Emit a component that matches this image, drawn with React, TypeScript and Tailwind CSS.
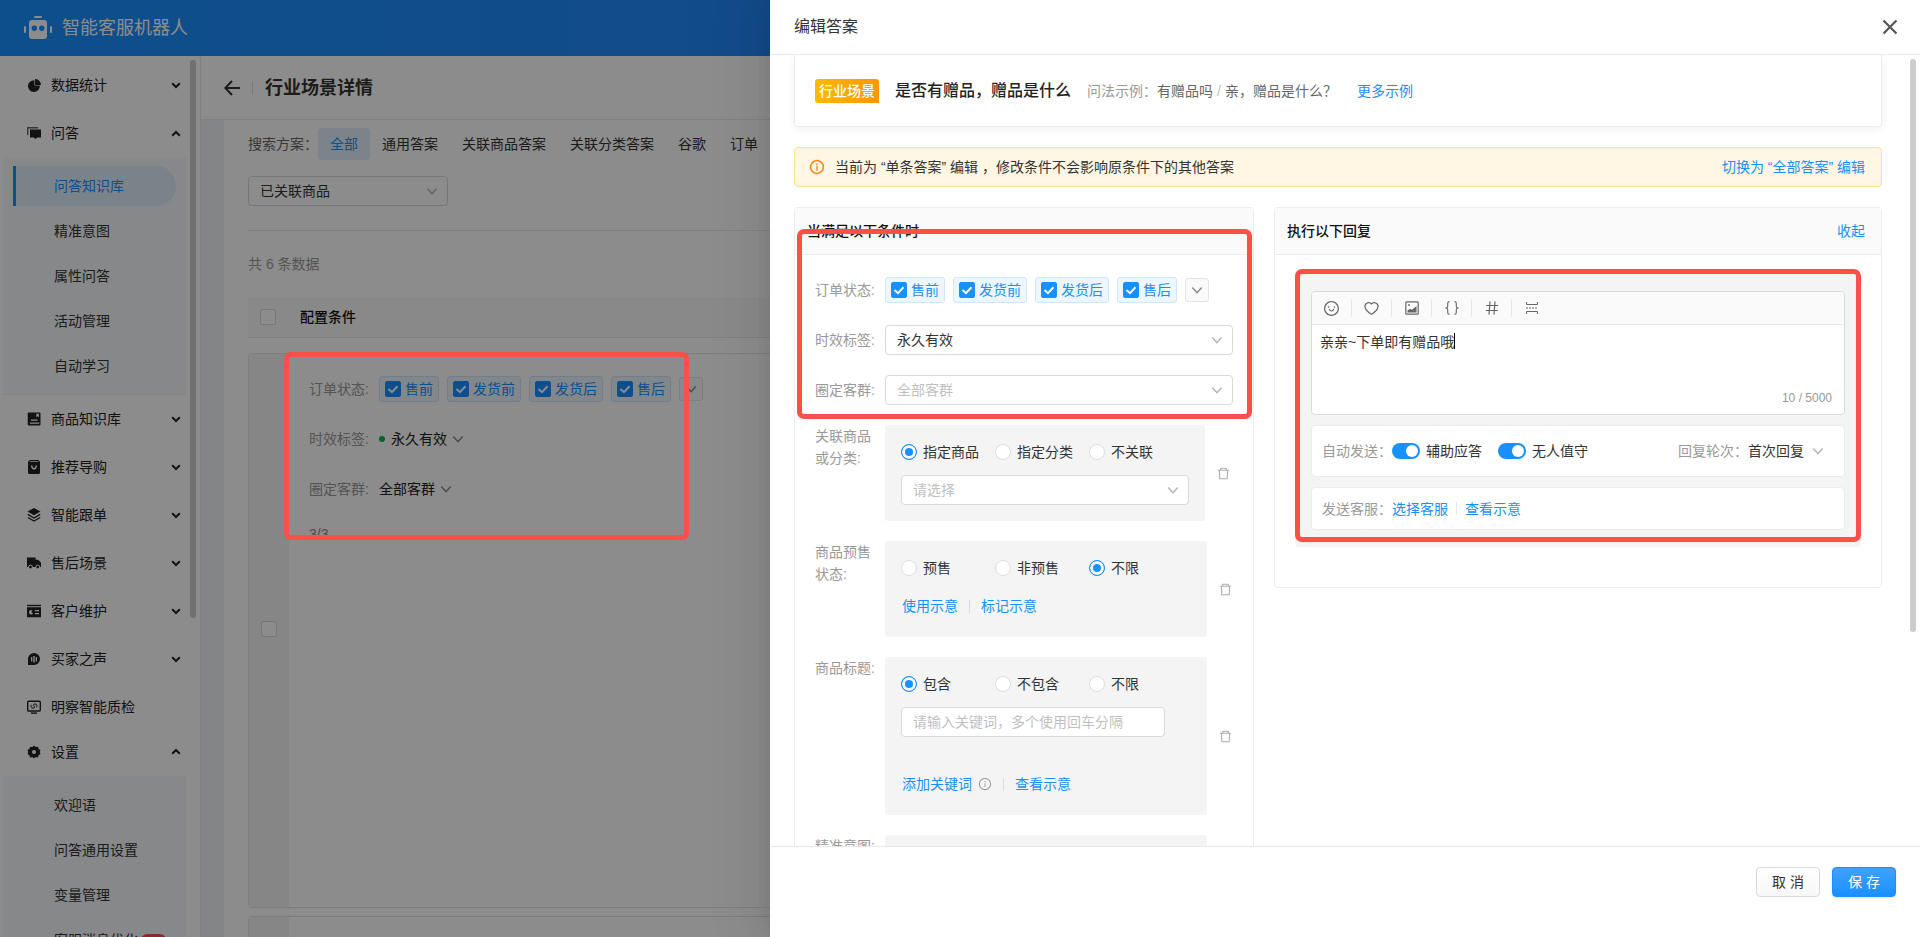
import { useState, type ReactNode } from 'react';
import {
  AiFillPieChart,
  AiOutlineDelete,
  AiOutlineHeart,
  AiOutlineInfoCircle,
  AiOutlineSmile,
} from 'react-icons/ai';

type MenuItem = {
  label: string;
  icon: ReactNode;
  open?: boolean;
  leaf?: boolean;
  children?: { label: string; active?: boolean; badge?: string }[];
};

const menu: MenuItem[] = [
  { label: '数据统计', icon: <AiFillPieChart className="size-[15px]" /> },
  {
    label: '问答',
    open: true,
    icon: (
      <MenuIcon>
        <path d="M0 1h11v1.4H1.4V9H0z" opacity=".7" />
        <path d="M3 3.4h11v8h-3.6L8.5 13l-1.9-1.6H3z" />
      </MenuIcon>
    ),
    children: [
      { label: '问答知识库', active: true },
      { label: '精准意图' },
      { label: '属性问答' },
      { label: '活动管理' },
      { label: '自动学习' },
    ],
  },
  {
    label: '商品知识库',
    icon: (
      <MenuIcon>
        <path
          fillRule="evenodd"
          d="M2 .5h10.500q1 0 1 1v11q0 1-1 1H2q-1.300 0-1.300-1.300V1.800Q.7.500 2 .5zM9.300 1.800v3.400l1.300-.9 1.300.9V1.800zM4 7.600v1.100h6.500V7.600zM3 10.400v1.300h9.200v-1.300z"
        />
      </MenuIcon>
    ),
  },
  {
    label: '推荐导购',
    icon: (
      <MenuIcon>
        <path
          fillRule="evenodd"
          d="M2.500 0h9L13 2v10.500q0 1.500-1.500 1.500h-9Q1 14 1 12.500V2zM3 1.200 2.500 2h9l-.5-.8zM4 5.500C4 11 10 11 10 5.500H8.600c0 3.200-3.200 3.200-3.200 0z"
        />
      </MenuIcon>
    ),
  },
  {
    label: '智能跟单',
    icon: (
      <MenuIcon>
        <path d="M7 0l6.500 3.600L7 7.300.5 3.600z" />
        <path
          d="M.8 6.400 7 10l6.200-3.600M.8 9.500 7 13l6.200-3.500"
          fill="none"
          stroke="currentColor"
          strokeWidth="1.300"
        />
      </MenuIcon>
    ),
  },
  {
    label: '售后场景',
    icon: (
      <MenuIcon>
        <path d="M0 1.500h8.600v2.200h2.600L14 6.800V11H0z" />
        <circle cx="3.500" cy="11" r="1.900" className="stroke-white" />
        <circle cx="10.700" cy="11" r="1.900" className="stroke-white" />
      </MenuIcon>
    ),
  },
  {
    label: '客户维护',
    icon: (
      <MenuIcon>
        <path d="M0 .8h14v1.400H0z" />
        <path
          fillRule="evenodd"
          d="M0 3.300h14v10H0zM5 6.200a2.200 2.200 0 1 0 1 3.300L4.500 8.300zM8 6v1.200h4V6zM8 9v1.200h4V9z"
        />
      </MenuIcon>
    ),
  },
  {
    label: '买家之声',
    icon: (
      <MenuIcon>
        <path
          fillRule="evenodd"
          d="M7 1a6 6 0 1 1 0 12H1V7a6 6 0 0 1 6-6zM4 5v4.400h1.300V5zM6.300 3.900v6.600h1.400V3.900zM8.700 5v4.400H10V5z"
        />
      </MenuIcon>
    ),
  },
  {
    label: '明察智能质检',
    leaf: true,
    icon: (
      <MenuIcon>
        <rect x=".7" y="1.200" width="12.600" height="9.800" rx="1" fill="none" stroke="currentColor" strokeWidth="1.400" />
        <path
          d="M9.500 4.300Q6.500 3 6.500 5.200l1 1.700q0 2.300-3 1M4.300 4.800q-1 1.500.4 2.800M9.700 4.600q1 1.500-.4 2.900"
          fill="none"
          stroke="currentColor"
        />
        <path d="M4 12.400h6v1.400H4z" />
      </MenuIcon>
    ),
  },
  {
    label: '设置',
    open: true,
    icon: (
      <MenuIcon>
        <path
          fillRule="evenodd"
          d="M7 .5l1.700 1.600 2.300-.4.700 2.200 1.800 1.200L12.800 7l.7 2-1.900 1.200-.6 2.200-2.300-.3L7 13.500l-1.700-1.400-2.300.3-.6-2.200L.5 9l.7-2-.7-1.900 1.900-1.200.6-2.200 2.300.4zM7 5a2 2 0 1 0 0 4 2 2 0 0 0 0-4z"
        />
      </MenuIcon>
    ),
    children: [
      { label: '欢迎语' },
      { label: '问答通用设置' },
      { label: '变量管理' },
      { label: '客服消息优化', badge: 'NEW' },
    ],
  },
];

const orderStates = ['售前', '发货前', '发货后', '售后'];

function MenuIcon({ children }: { children: ReactNode }) {
  return (
    <svg viewBox="0 0 14 14" className="size-[14px]" fill="currentColor">
      {children}
    </svg>
  );
}

function MenuArrow({ up }: { up?: boolean }) {
  return (
    <svg viewBox="0 0 10 7" className={up ? 'h-[7px] w-[10px] rotate-180' : 'h-[7px] w-[10px]'}>
      <path d="M1.200 1.200 5 5l3.800-3.800" fill="none" stroke="currentColor" strokeWidth="2" />
    </svg>
  );
}

function DownIcon({ className = '' }: { className?: string }) {
  return (
    <svg viewBox="0 0 12 12" className={`size-3 shrink-0 ${className}`} fill="none" stroke="currentColor" strokeWidth="1.500">
      <path d="M1.300 3.500 6 8.700l4.700-5.200" />
    </svg>
  );
}

function Sidebar() {
  return (
    <aside className="relative w-[200px] shrink-0 overflow-hidden bg-white pt-[5px]">
      {menu.map((item) => (
        <div key={item.label}>
          <button
            className={`flex w-full items-center pl-[27px] pr-[19px] text-left text-[#222] ${
              item.label === '设置' ? 'h-[45px] pb-1' : 'h-12'
            }`}
          >
            <span className="w-6 shrink-0">{item.icon}</span>
            <span className="flex-1">{item.label}</span>
            {!item.leaf && <MenuArrow up={item.open} />}
          </button>
          {item.children && (
            <div className="ml-[3px] mr-[14px] flex flex-col gap-[5px] border-b border-[#eef1f5] bg-[#f6f8fb] pb-2 pl-[10px] pr-[10px] pt-[9px]">
              {item.children.map((c) => (
                <a
                  key={c.label}
                  href="#"
                  className={
                    c.active
                      ? 'flex h-10 items-center rounded-r-full border-l-[3px] border-[#1890ff] bg-[#e0eefc] pl-[38px] text-[#1890ff]'
                      : 'flex h-10 items-center pl-[41px] text-[#333]'
                  }
                >
                  {c.label}
                  {c.badge && (
                    <span className="ml-[3px] h-[12px] rounded-full bg-[#ff4d4f] px-[3px] text-[8px] leading-[12px] text-white">
                      {c.badge}
                    </span>
                  )}
                </a>
              ))}
            </div>
          )}
        </div>
      ))}
      <div className="absolute right-1 top-1 h-[558px] w-[6px] rounded-full bg-[#ccc]" />
    </aside>
  );
}

function CheckBox({ label, checked = false }: { label: string; checked?: boolean }) {
  const [on, setOn] = useState(checked);
  return (
    <span className="relative grid size-4 shrink-0 place-items-center">
      <input
        type="checkbox"
        aria-label={label}
        checked={on}
        onChange={() => setOn(!on)}
        className="size-4 appearance-none rounded-[2px] border border-[#d9d9d9] bg-white checked:border-[#1890ff] checked:bg-[#1890ff]"
      />
      {on && (
        <svg viewBox="0 0 12 12" className="pointer-events-none absolute size-3">
          <path d="M1.500 6 5 9.200 10.500 3.300" fill="none" stroke="#fff" strokeWidth="2" />
        </svg>
      )}
    </span>
  );
}

function OrderStateTags() {
  return (
    <div className="flex items-center gap-2">
      {orderStates.map((s) => (
        <label
          key={s}
          className="flex h-[26px] items-center gap-1 whitespace-nowrap rounded-[3px] border border-[#cfe6fb] bg-[#ecf6fe] px-[5px] text-[#1890ff]"
        >
          <CheckBox label={s} checked />
          {s}
        </label>
      ))}
      <button
        aria-label="更多"
        className="grid size-6 place-items-center rounded-[3px] border border-[#e3e3e3] bg-[#fafafa] text-[#888]"
      >
        <DownIcon />
      </button>
    </div>
  );
}

function Select({ label, value, placeholder }: { label: string; value: string; placeholder?: boolean }) {
  return (
    <div className="relative flex w-full items-center">
      <select
        aria-label={label}
        className={`h-[30px] w-full appearance-none rounded-[4px] border border-[#d9d9d9] bg-white px-[11px] ${
          placeholder ? 'text-[#bfbfbf]' : 'text-[#333]'
        }`}
      >
        <option>{value}</option>
      </select>
      <DownIcon className="pointer-events-none absolute right-[10px] text-[#b5b5b5]" />
    </div>
  );
}

function Radios({ name, options, value }: { name: string; options: string[]; value: string }) {
  const [current, setCurrent] = useState(value);
  return (
    <div className="flex h-[22px] items-center">
      {options.map((o) => (
        <label key={o} className="flex w-[94px] items-center gap-[6px] whitespace-nowrap text-[#333]">
          <input
            type="radio"
            name={name}
            checked={current === o}
            onChange={() => setCurrent(o)}
            className="size-4 shrink-0 appearance-none rounded-full border border-[#dedede] bg-white checked:border-[#1890ff] checked:bg-[#1890ff] checked:shadow-[inset_0_0_0_3px_#fff]"
          />
          {o}
        </label>
      ))}
    </div>
  );
}

function Field({ label, children }: { label: string; children: ReactNode }) {
  return (
    <div className="flex items-center">
      <span className="w-[70px] shrink-0 text-[#999]">{label}</span>
      {children}
    </div>
  );
}

function Group({ label, wide, children }: { label: ReactNode; wide?: boolean; children: ReactNode }) {
  return (
    <div className="mt-5 flex">
      <span className="w-[70px] shrink-0 whitespace-nowrap text-[#999]">{label}</span>
      <div className={`rounded-[3px] bg-[#f4f4f4] px-4 py-4 ${wide ? 'w-[322px]' : 'w-[320px]'}`}>{children}</div>
      <button aria-label="删除" className="ml-[11px] self-center text-[#aaa]">
        <AiOutlineDelete className="size-[15px]" />
      </button>
    </div>
  );
}

function Divider() {
  return <span className="mx-[11px] h-[13px] w-px bg-[#ddd]" />;
}

function Link({ children }: { children: ReactNode }) {
  return (
    <a href="#" className="whitespace-nowrap text-[#1890ff]">
      {children}
    </a>
  );
}

function Switch({ label }: { label: string }) {
  return (
    <label className="mr-4 flex items-center gap-[6px] text-[#333]">
      <span className="relative flex items-center">
        <input type="checkbox" role="switch" defaultChecked className="peer h-4 w-7 appearance-none rounded-full bg-[#bfbfbf] checked:bg-[#1890ff]" />
        <span className="pointer-events-none absolute left-[2px] size-3 rounded-full bg-white peer-checked:left-[14px]" />
      </span>
      {label}
    </label>
  );
}

function ToolButton({ label, children }: { label: string; children: ReactNode }) {
  return (
    <button
      aria-label={label}
      className="grid h-[18px] w-10 place-items-center border-r border-[#e8e8e8] text-[#666] last:border-0"
    >
      {children}
    </button>
  );
}

function KnowledgePage() {
  return (
    <main className="flex min-w-0 flex-1 flex-col border-l border-[#e8eaee] bg-[#f0f2f5]">
      <div className="flex h-[64px] shrink-0 items-center border-b border-[#e8e8e8] bg-white pl-[23px]">
        <button aria-label="返回" className="text-[#333]">
          <svg viewBox="0 0 16 16" className="size-4" fill="none" stroke="currentColor" strokeWidth="2">
            <path d="M16 8H1.500M8 1 1.300 8 8 15" />
          </svg>
        </button>
        <span className="mx-3 h-3 w-px bg-[#ddd]" />
        <h1 className="text-lg font-bold text-[#333]">行业场景详情</h1>
      </div>

      <div className="ml-[23px] flex-1 overflow-hidden bg-white px-6 pt-2">
        <div className="flex h-8 items-center whitespace-nowrap">
          <span className="text-[#666]">搜索方案：</span>
          {['全部', '通用答案', '关联商品答案', '关联分类答案', '谷歌', '订单'].map((t, i) => (
            <button
              key={t}
              className={
                i === 0 ? 'h-8 rounded-[4px] bg-[#e0f1fd] px-3 text-[#1890ff]' : 'h-8 px-3 text-[#333]'
              }
            >
              {t}
            </button>
          ))}
        </div>
        <div className="mt-4 w-[200px]">
          <Select label="已关联商品" value="已关联商品" />
        </div>
        <div className="mt-6 border-t border-[#e8e8e8] pt-[22px] text-[#999]">共 6 条数据</div>

        <table className="mt-[22px] w-full border-separate border-spacing-0 text-left">
          <thead>
            <tr className="h-[41px] bg-[#fafafa]">
              <th className="w-[52px] border-b border-[#e8e8e8] pl-3">
                <CheckBox label="全选" />
              </th>
              <th className="border-b border-[#e8e8e8] font-medium text-[#111]">配置条件</th>
            </tr>
          </thead>
          <tbody>
            <tr className="h-[15px]">
              <td className="p-0" />
              <td className="p-0" />
            </tr>
            <tr className="h-[555px]">
              <td colSpan={2} className="h-[555px] rounded-[4px] border border-[#e4e4e4] p-0">
                <div className="flex h-[553px]">
                  <div className="flex w-10 items-center justify-center bg-[#f4f4f4] pb-[3px]">
                    <CheckBox label="选择答案" />
                  </div>
                  <div className="flex flex-col pl-5 pt-[22px]">
                    <Field label="订单状态:">
                      <OrderStateTags />
                    </Field>
                    <div className="mt-[26px]">
                      <Field label="时效标签:">
                        <span className="mr-[6px] size-[6px] rounded-full bg-[#00b457]" />
                        <span className="text-[#222]">永久有效</span>
                        <DownIcon className="ml-[5px] text-[#888]" />
                      </Field>
                    </div>
                    <div className="mt-7">
                      <Field label="圈定客群:">
                        <span className="text-[#222]">全部客群</span>
                        <DownIcon className="ml-[5px] text-[#888]" />
                      </Field>
                    </div>
                    <span className="mt-6 h-4 leading-[20px] text-[#888]">3/3</span>
                  </div>
                </div>
              </td>
            </tr>
            <tr className="h-2">
              <td className="p-0" />
              <td className="p-0" />
            </tr>
            <tr>
              <td colSpan={2} className="rounded-[4px] border border-[#e4e4e4] p-0">
                <div className="h-[200px] w-10 bg-[#f4f4f4]" />
              </td>
            </tr>
          </tbody>
        </table>
      </div>
    </main>
  );
}

function ConditionPanel() {
  return (
    <section className="w-[460px] shrink-0 rounded-t-[4px] border border-[#ececec]">
      <h2 className="flex h-[47px] items-center border-b border-[#ececec] bg-[#fafafa] pl-3 font-medium text-[#111]">
        当满足以下条件时
      </h2>
      <div className="pl-5 pr-5 pt-[22px]">
        <Field label="订单状态:">
          <OrderStateTags />
        </Field>
        <div className="mt-[22px]">
          <Field label="时效标签:">
            <Select label="时效标签" value="永久有效" />
          </Field>
        </div>
        <div className="mt-5">
          <Field label="圈定客群:">
            <Select label="圈定客群" value="全部客群" placeholder />
          </Field>
        </div>

        <Group
          label={
            <>
              关联商品
              <br />
              或分类:
            </>
          }
        >
          <Radios name="relation" options={['指定商品', '指定分类', '不关联']} value="指定商品" />
          <div className="mt-3">
            <Select label="请选择" value="请选择" placeholder />
          </div>
        </Group>

        <Group
          wide
          label={
            <>
              商品预售
              <br />
              状态:
            </>
          }
        >
          <Radios name="presale" options={['预售', '非预售', '不限']} value="不限" />
          <div className="mb-1 mt-4 flex items-center pl-px">
            <Link>使用示意</Link>
            <Divider />
            <Link>标记示意</Link>
          </div>
        </Group>

        <Group wide label="商品标题:">
          <Radios name="title" options={['包含', '不包含', '不限']} value="包含" />
          <input
            type="text"
            aria-label="关键词"
            placeholder="请输入关键词，多个使用回车分隔"
            className="mt-3 h-[30px] w-[264px] rounded-[4px] border border-[#d9d9d9] bg-white px-[11px] placeholder:text-[#bfbfbf]"
          />
          <div className="mb-1 mt-9 flex items-center pl-px">
            <Link>添加关键词</Link>
            <AiOutlineInfoCircle className="ml-[6px] size-[14px] text-[#999]" />
            <Divider />
            <Link>查看示意</Link>
          </div>
        </Group>

        <Group wide label="精准意图:">
          <Radios name="intent" options={['包含', '不包含', '不限']} value="不限" />
        </Group>
      </div>
    </section>
  );
}

function ReplyPanel() {
  const [reply, setReply] = useState('亲亲~下单即有赠品哦');
  return (
    <section className="min-w-0 flex-1 self-start rounded-[4px] border border-[#ececec]">
      <div className="flex h-[47px] items-center justify-between border-b border-[#ececec] bg-[#fafafa] pl-3 pr-4">
        <h2 className="font-medium text-[#111]">执行以下回复</h2>
        <Link>收起</Link>
      </div>
      <div className="mx-5 mb-10 mt-4 rounded-[4px] bg-[#f4f4f4] px-4 pb-[17px] pt-5">
        <div className="rounded-[4px] border border-[#d9d9d9] bg-white">
          <div className="flex h-[33px] items-center rounded-t-[4px] border-b border-[#e8e8e8] bg-[#fafafa]">
            <ToolButton label="表情">
              <AiOutlineSmile className="size-[17px]" />
            </ToolButton>
            <ToolButton label="收藏">
              <AiOutlineHeart className="size-[17px]" />
            </ToolButton>
            <ToolButton label="图片">
              <svg viewBox="0 0 14 14" className="size-[14px]">
                <rect x=".8" y=".8" width="12.400" height="12.400" rx="1" fill="none" stroke="currentColor" strokeWidth="1.200" />
                <path d="M2.500 11.500V9.500L5 7.800l2 1L11.500 5v6.500z" fill="currentColor" />
                <circle cx="4" cy="4" r=".9" fill="currentColor" />
              </svg>
            </ToolButton>
            <ToolButton label="变量">
              <svg viewBox="0 0 14 14" className="size-[14px]" fill="none" stroke="currentColor" strokeWidth="1.100">
                <path d="M4.500.6Q2.700.6 2.700 2.500v2.700Q2.700 6.600 1.200 7q1.500.4 1.500 1.800v2.700q0 1.900 1.800 1.900M9.500.6q1.800 0 1.800 1.900v2.700q0 1.400 1.500 1.800-1.500.4-1.500 1.800v2.700q0 1.900-1.800 1.900" />
              </svg>
            </ToolButton>
            <ToolButton label="话题">
              <svg viewBox="0 0 14 14" className="size-[14px]" fill="none" stroke="currentColor" strokeWidth="1.200">
                <path d="M5 .5 4 13.500M10 .5 9 13.500M1.200 4.500h12M.8 9.500h12" />
              </svg>
            </ToolButton>
            <ToolButton label="分隔">
              <svg viewBox="0 0 14 14" className="size-[14px]" fill="none" stroke="currentColor">
                <path d="M1.500 1v2.500h11V1M1.500 13v-2.500h11V13" />
                <path d="M1 7h12" strokeDasharray="2 1" />
              </svg>
            </ToolButton>
          </div>
          <div className="relative h-[89px]">
            <textarea
              aria-label="回复内容"
              value={reply}
              onChange={(e) => setReply(e.target.value)}
              className="block h-full w-full resize-none rounded-b-[4px] bg-white px-2 py-[6px] leading-[22px] text-[#333] outline-none"
            />
            <span className="absolute left-[142px] top-2 h-4 w-px bg-black" />
            <span className="absolute bottom-2 right-3 text-xs text-[#999]">{reply.length} / 5000</span>
          </div>
        </div>

        <div className="mt-[10px] flex h-[52px] items-center rounded-[4px] border border-[#ececec] bg-white pl-[10px] pr-5">
          <span className="text-[#999]">自动发送：</span>
          <Switch label="辅助应答" />
          <Switch label="无人值守" />
          <button className="ml-auto flex items-center text-[#333]">
            <span className="text-[#999]">回复轮次：</span>
            首次回复
            <DownIcon className="ml-2 text-[#b5b5b5]" />
          </button>
        </div>

        <div className="mt-[10px] flex h-[43px] items-center rounded-[4px] border border-[#ececec] bg-white pl-[10px]">
          <span className="text-[#999]">发送客服：</span>
          <Link>选择客服</Link>
          <span className="mx-2 h-[13px] w-px bg-[#e8e8e8]" />
          <Link>查看示意</Link>
        </div>
      </div>
    </section>
  );
}

function EditDrawer() {
  return (
    <div className="absolute inset-y-0 right-0 flex w-[1150px] flex-col bg-white shadow-[-6px_0_16px_-8px_rgba(0,0,0,0.08),-9px_0_28px_rgba(0,0,0,0.05),-12px_0_48px_16px_rgba(0,0,0,0.03)]">
      <header className="flex h-[55px] shrink-0 items-center justify-between border-b border-[#e8e8e8] pl-6 pr-[22px]">
        <h2 className="text-base text-[#333]">编辑答案</h2>
        <button aria-label="关闭" className="text-[#555]">
          <svg viewBox="0 0 16 16" className="size-4" fill="none" stroke="currentColor" strokeWidth="2.200">
            <path d="M1.500 1.500l13 13M14.500 1.500l-13 13" />
          </svg>
        </button>
      </header>

      <div className="relative min-h-0 flex-1 overflow-hidden pl-6 pr-[38px]">
        <div className="flex h-[72px] items-center rounded-b-[4px] border border-t-0 border-[#ececec] pl-5 shadow-[0_2px_8px_rgba(0,0,0,0.06)]">
          <span className="rounded-[3px] rounded-br-none bg-linear-to-r from-[#ffb900] to-[#ff9500] px-1 leading-6 font-medium text-white">
            行业场景
          </span>
          <h3 className="ml-4 text-base font-medium text-[#222]">是否有赠品，赠品是什么</h3>
          <span className="ml-4 text-[#999]">问法示例：</span>
          <span className="text-[#666]">有赠品吗</span>
          <span className="mx-1 text-[#bbb]">/</span>
          <span className="mr-5 text-[#666]">亲，赠品是什么？</span>
          <Link>更多示例</Link>
        </div>

        <div className="mt-5 flex h-10 items-center rounded-[4px] border border-[#ffdf94] bg-[#fff6e3] pl-[14px] pr-4">
          <AiOutlineInfoCircle className="size-4 text-[#ee8510]" strokeWidth="20" />
          <span className="ml-[10px] flex-1 text-[#333]">
            当前为 “单条答案” 编辑 ，修改条件不会影响原条件下的其他答案
          </span>
          <Link>切换为 “全部答案” 编辑</Link>
        </div>

        <div className="mt-5 flex gap-5">
          <ConditionPanel />
          <ReplyPanel />
        </div>
        <div className="absolute right-1 top-1 h-[573px] w-[6px] rounded-full bg-[#ccc]" />
      </div>

      <footer className="flex h-[91px] shrink-0 items-start justify-end gap-3 border-t border-[#e8e8e8] pr-6 pt-5">
        <button className="h-[30px] w-16 rounded-[4px] border border-[#d9d9d9] bg-linear-to-b from-white to-[#f7f7f7] text-[#333]">
          取 消
        </button>
        <button className="h-[30px] w-16 rounded-[4px] border border-[#1890ff] bg-linear-to-b from-[#3ea2ff] to-[#1890ff] text-white shadow-sm">
          保 存
        </button>
      </footer>
    </div>
  );
}

export default function App() {
  return (
    <div className="relative flex h-screen flex-col overflow-hidden bg-white font-['Liberation_Sans','Noto_Sans_CJK_SC',sans-serif] text-sm leading-[22px]">
      <header className="flex h-14 shrink-0 items-center bg-linear-to-r from-[#1890ff] via-[#2587f9] to-[#3070f0] pl-6">
        <svg viewBox="0 0 28 24" className="h-6 w-7" fill="#fff">
          <rect x="10" y="0" width="8" height="2" rx="1" />
          <path
            fillRule="evenodd"
            d="M8 4h12q3 0 3 3v13q0 3-3 3H8q-3 0-3-3V7q0-3 3-3zm2.300 5.500a2.700 2.700 0 1 0 0 5.400 2.700 2.700 0 0 0 0-5.400zm7.500 0a2.700 2.700 0 1 0 0 5.400 2.700 2.700 0 0 0 0-5.400z"
          />
          <rect x="0" y="10" width="2" height="7" rx="1" />
          <rect x="26" y="10" width="2" height="7" rx="1" />
        </svg>
        <span className="ml-[10px] text-lg text-white">智能客服机器人</span>
      </header>
      <div className="flex min-h-0 flex-1">
        <Sidebar />
        <KnowledgePage />
      </div>

      <div className="absolute inset-0 bg-black/45" />
      <EditDrawer />

      {/* highlight frames, drawn above everything else */}
      <div className="pointer-events-none absolute left-[284px] top-[352px] h-[188px] w-[405px] rounded-[7px] border-[5px] border-[#fb4f49]" />
      <div className="pointer-events-none absolute right-[668px] top-[229px] h-[190px] w-[455px] rounded-[7px] border-[5px] border-[#fb4f49]" />
      <div className="pointer-events-none absolute right-[59px] top-[269px] h-[273px] w-[566px] rounded-[7px] border-[5px] border-[#fb4f49]" />
    </div>
  );
}
